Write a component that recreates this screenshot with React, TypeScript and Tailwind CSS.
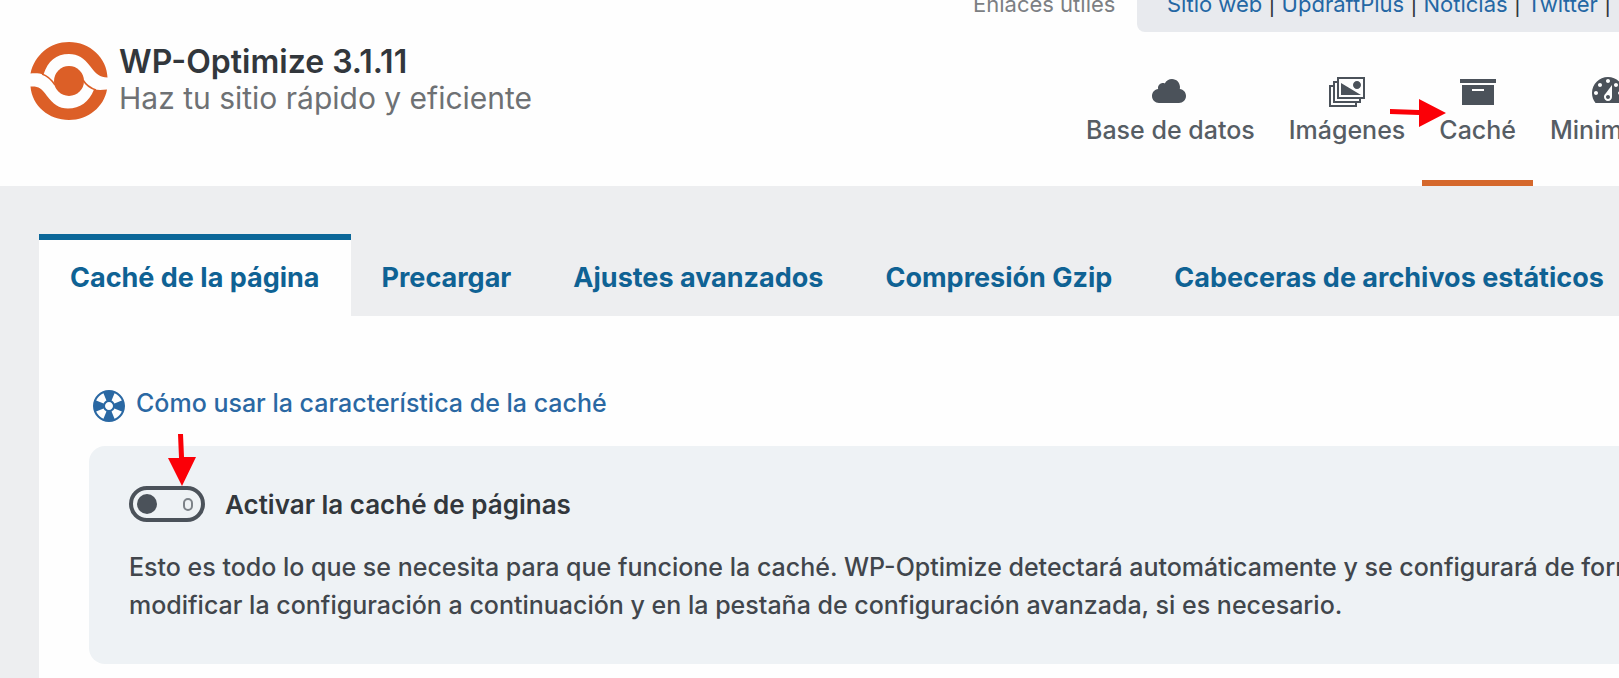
import { ReactNode, useState } from "react";

const LINKS = ["Sitio web", "UpdraftPlus", "Noticias", "Twitter"];

const TABS = [
  "Caché de la página",
  "Precargar",
  "Ajustes avanzados",
  "Compresión Gzip",
  "Cabeceras de archivos estáticos",
];

function DashIcon({ d, className }: { d: string; className: string }) {
  return (
    <svg viewBox="0 0 20 20" fill="currentColor" aria-hidden="true" className={className}>
      <path fillRule="evenodd" d={d} />
    </svg>
  );
}

const ICONS = {
  cloud:
    "M14.9 9c1.8.2 3.1 1.7 3.1 3.5 0 1.9-1.6 3.5-3.5 3.5h-10C2.6 16 1 14.4 1 12.5 1 10.7 2.3 9.3 4.1 9 4 8.9 4 8.7 4 8.5 4 7.1 5.1 6 6.5 6c.3 0 .7.1.9.2C8.1 4.9 9.4 4 11 4c2.2 0 4 1.8 4 4 0 .4-.1.7-.1 1z",
  images:
    "M5 3h14v11h-2v2h-2v2H1V7h2V5h2V3zm13 10V4H6v9h12zm-1-6c0-1.1-.9-2-2-2s-2 .9-2 2 .9 2 2 2 2-.9 2-2zM7 6l10 6H7V6zM16 15v-1H5V6H4v9h12zM14 17v-1H3V8H2v9h12z",
  archive: "M19 4v2H1V4h18zM2 7h16v10H2V7zm11 3V9H7v1h6z",
  gauge:
    "M3.76 16h12.48c1.1-1.37 1.76-3.11 1.76-5 0-4.42-3.58-8-8-8s-8 3.58-8 8c0 1.89.66 3.63 1.76 5zM10 4c.55 0 1 .45 1 1s-.45 1-1 1-1-.45-1-1 .45-1 1-1zM6 6c.55 0 1 .45 1 1s-.45 1-1 1-1-.45-1-1 .45-1 1-1zm8 0c.55 0 1 .45 1 1s-.45 1-1 1-1-.45-1-1 .45-1 1-1zm-5.37 5.55L12 7v6c0 1.1-.9 2-2 2s-2-.9-2-2c0-.57.24-1.08.63-1.45zM4 10c.55 0 1 .45 1 1s-.45 1-1 1-1-.45-1-1 .45-1 1-1zm12 0c.55 0 1 .45 1 1s-.45 1-1 1-1-.45-1-1 .45-1 1-1zm-5 3c0-.55-.45-1-1-1s-1 .45-1 1 .45 1 1 1 1-.45 1-1z",
  sos: "M18 10c0-4.42-3.58-8-8-8s-8 3.58-8 8 3.58 8 8 8 8-3.58 8-8zM7.23 3.57L8.72 7.3c-.62.29-1.13.8-1.42 1.42L3.57 7.23c.71-1.64 2.02-2.95 3.66-3.66zm9.2 3.66L12.7 8.72c-.29-.62-.8-1.13-1.42-1.42l1.49-3.73c1.64.71 2.95 2.02 3.66 3.66zM10 12c-1.1 0-2-.9-2-2s.9-2 2-2 2 .9 2 2-.9 2-2 2zm-6.43.77l3.73-1.49c.29.62.8 1.13 1.42 1.42l-1.49 3.73c-1.64-.71-2.95-2.02-3.66-3.66zm9.2 3.66l-1.49-3.73c.62-.29 1.13-.8 1.42-1.42l3.73 1.49c-.71 1.64-2.02 2.95-3.66 3.66z",
};

function Logo() {
  return (
    <svg viewBox="0 0 78 78" aria-hidden="true" className="h-[78px] w-[78px] shrink-0">
      <g fill="#dc5f27">
        <path d="M.5 31.500C4.500 13 20 0 39 0C60 0 77 16 77.500 35.500C70 35.500 66 32 60 24C54 16 48 12 39 12C26 12 18 19 13.500 32.500C10 31.500 6 31 .5 31.500Z" />
        <path d="M77 47.500C74 65 58 78 39 78C19 78 2 64 .500 44.500C8 44 11.500 46 17 54C23 62 29 66.500 38 66.500C50 66.500 59 60 64 47.500C68 48 72 48 77 47.500Z" />
        <circle cx="39" cy="39" r="15" />
      </g>
      <path
        d="M12 32C18 34 21 37 25 43M53 38C56 43 60 46 66 48"
        fill="none"
        stroke="#dc5f27"
        strokeWidth="1.500"
      />
    </svg>
  );
}

function NavItem({
  icon,
  label,
  active,
  children,
}: {
  icon: string;
  label: string;
  active?: boolean;
  children?: ReactNode;
}) {
  return (
    <a
      href="#"
      className={`relative flex shrink-0 flex-col items-center border-b-6 px-[17px] pb-[34px] text-[25px] leading-8 font-medium text-[#565d64] ${
        active ? "border-[#d5682c]" : "border-transparent"
      }`}
    >
      <DashIcon d={icon} className="mb-[3px] h-10 w-10 text-[#4b525a]" />
      {label}
      {children}
    </a>
  );
}

function Header() {
  return (
    <header className="flex h-[186px] shrink-0 justify-between overflow-hidden bg-[#fefefe]">
      <div className="flex items-start gap-[11px] pt-[42px] pl-[30px]">
        <Logo />
        <div className="pt-[2px] leading-9">
          <h1 className="text-[32px] font-semibold text-[#32373c]">WP-Optimize 3.1.11</h1>
          <p className="text-[30px] text-[#6e7174]">Haz tu sitio rápido y eficiente</p>
        </div>
      </div>

      <div className="flex w-[646px] shrink-0 flex-col justify-between whitespace-nowrap">
        <div className="flex text-[22px] leading-6">
          <span className="-mt-2 w-[164px] shrink-0 text-[#7c7f83]">Enlaces útiles</span>
          <div className="h-8 shrink-0 grow rounded-bl-lg bg-[#e8eaee] pl-[30px]">
            <div className="-mt-2 flex gap-1.5 text-[#32373c]">
              {LINKS.map((link) => (
                <span key={link} className="flex gap-1.5">
                  <a href="#" className="text-[#2467a4]">
                    {link}
                  </a>
                  <span>|</span>
                </span>
              ))}
            </div>
          </div>
        </div>
        <nav className="flex pl-24">
          <NavItem icon={ICONS.cloud} label="Base de datos" />
          <NavItem icon={ICONS.images} label="Imágenes" />
          <NavItem icon={ICONS.archive} label="Caché" active>
            <svg
              viewBox="0 0 56 28"
              fill="#fb0007"
              aria-hidden="true"
              className="absolute top-7 -left-8 h-7 w-14"
            >
              <path d="M0 10L29 11V0L56 14L29 28V16L0 15Z" />
            </svg>
          </NavItem>
          <NavItem icon={ICONS.gauge} label="Minimizar" />
        </nav>
      </div>
    </header>
  );
}

function CacheToggle() {
  const [enabled, setEnabled] = useState(false);

  return (
    <div className="flex items-start gap-5">
      <div className="relative h-9 w-19 shrink-0">
        <input
          id="enable-cache"
          type="checkbox"
          role="switch"
          checked={enabled}
          onChange={(e) => setEnabled(e.target.checked)}
          className="block h-9 w-19 cursor-pointer appearance-none rounded-full border-4 border-[#4b525a]"
        />
        <span
          className={`pointer-events-none absolute inset-0 flex items-center justify-between pr-3 pl-2 ${
            enabled ? "flex-row-reverse" : ""
          }`}
        >
          <span className="h-5 w-5 rounded-full bg-[#4b525a]" />
          <span className="h-[13px] w-[10px] rounded-full border-2 border-[#7c8288]" />
        </span>
        <svg
          viewBox="0 0 28 52"
          fill="#fb0007"
          aria-hidden="true"
          className="pointer-events-none absolute bottom-9 left-[39px] h-[52px] w-7"
        >
          <path d="M10 0H15L16 23L28 23L14 52L0 24L11 24Z" />
        </svg>
      </div>
      <label
        htmlFor="enable-cache"
        className="text-[26px] leading-[38px] font-semibold text-[#32373c]"
      >
        Activar la caché de páginas
      </label>
    </div>
  );
}

export default function App() {
  const [tab, setTab] = useState(TABS[0]);

  return (
    <div className="flex min-h-screen flex-col overflow-hidden bg-[#edeef0] font-['Inter',sans-serif]">
      <Header />

      <main className="flex grow flex-col pt-12 pl-[39px]">
        <div role="tablist" className="flex whitespace-nowrap">
          {TABS.map((name) => (
            <button
              key={name}
              role="tab"
              aria-selected={tab === name}
              onClick={() => setTab(name)}
              className={`shrink-0 cursor-pointer border-t-6 px-[31px] pt-5 pb-5 text-[27px] leading-9 font-bold text-[#0f6294] ${
                tab === name ? "border-[#0b6799] bg-[#fefefe]" : "border-transparent"
              }`}
            >
              {name}
            </button>
          ))}
        </div>

        <section className="grow bg-[#fefefe] pt-[68px] pb-3 pl-[50px]">
          <a
            href="#"
            className="flex items-start text-[25px] leading-[38px] font-medium text-[#2a68a3]"
          >
            <DashIcon d={ICONS.sos} className="mt-[2px] mr-[7px] h-10 w-10" />
            Cómo usar la característica de la caché
          </a>

          <div className="mt-5 rounded-l-2xl bg-[#eef2f5] px-10 pt-10 pb-10">
            <CacheToggle />
            <p className="mt-6 text-[25px] leading-[38px] font-medium whitespace-nowrap text-[#41464c]">
              Esto es todo lo que se necesita para que funcione la caché. WP-Optimize detectará
              automáticamente y se configurará de forma
              <br />
              modificar la configuración a continuación y en la pestaña de configuración avanzada,
              si es necesario.
            </p>
          </div>
        </section>
      </main>
    </div>
  );
}
